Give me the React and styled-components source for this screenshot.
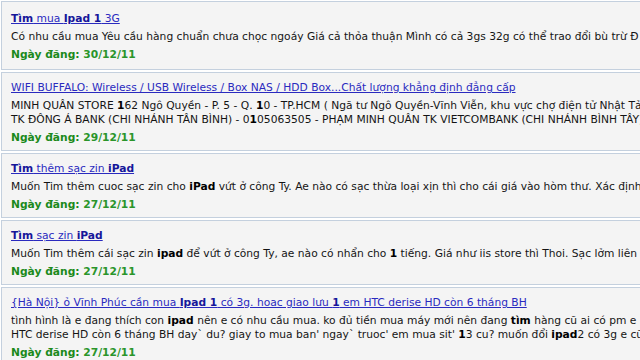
import React from "react";
import styled, { createGlobalStyle } from "styled-components";

const Global = createGlobalStyle`
  html, body { margin: 0; padding: 0; background: #ffffff; overflow: hidden; }
  body { font-family: "DejaVu Sans", Verdana, sans-serif; font-size: 10.7px; color: #111; }
`;

const List = styled.div`
  width: 1100px;
  padding: 1px 0 0 1px;
  display: flex;
  flex-direction: column;
  gap: 2px;
`;

const Item = styled.div`
  background: #f4f4f4;
  border: 1px solid #c4d0de;
  padding: ${(p) => (p.$first ? "10px 9px 7px" : "8px 9px 5px")};
  display: flex;
  flex-direction: column;
  gap: 4px;
`;

const Title = styled.a`
  display: block;
  line-height: 14px;
  color: #2a2abf;
  text-decoration: underline;
  white-space: nowrap;
  b { color: #16169a; }
`;

const Desc = styled.div`
  line-height: 14px;
  white-space: nowrap;
  color: #141414;
  b { color: #000; }
`;

const DateLine = styled.div`
  line-height: 14px;
  font-weight: bold;
  color: #1b8a1b;
  span { color: #2a952a; }
`;

const items = [
  {
    title: (
      <>
        <b>Tìm</b> mua <b>Ipad 1</b> 3G
      </>
    ),
    desc: [
      <>Có nhu cầu mua Yêu cầu hàng chuẩn chưa chọc ngoáy Giá cả thỏa thuận Mình có cả 3gs 32g có thể trao đổi bù trừ Đ</>,
    ],
    date: "30/12/11",
  },
  {
    title: <>WIFI BUFFALO: Wireless / USB Wireless / Box NAS / HDD Box...Chất lượng khẳng định đẳng cấp</>,
    desc: [
      <>MINH QUÂN STORE <b>1</b>62 Ngô Quyền - P. 5 - Q. <b>1</b>0 - TP.HCM ( Ngã tư Ngô Quyền-Vĩnh Viễn, khu vực chợ điện tử Nhật Tảo )</>,
      <>TK ĐÔNG Á BANK (CHI NHÁNH TÂN BÌNH) - 0<b>1</b>05063505 - PHẠM MINH QUÂN TK VIETCOMBANK (CHI NHÁNH BÌNH TÂY)</>,
    ],
    date: "29/12/11",
  },
  {
    title: (
      <>
        <b>Tìm</b> thêm sạc zin <b>iPad</b>
      </>
    ),
    desc: [
      <>Muốn Tim thêm cuoc sạc zin cho <b>iPad</b> vứt ở công Ty. Ae nào có sạc thừa loại xịn thì cho cái giá vào hòm thư. Xác định</>,
    ],
    date: "27/12/11",
  },
  {
    title: (
      <>
        <b>Tìm</b> sạc zin <b>iPad</b>
      </>
    ),
    desc: [
      <>Muốn Tim thêm cái sạc zin <b>ipad</b> để vứt ở công Ty, ae nào có nhẩn cho <b>1</b> tiếng. Giá như iis store thì Thoi. Sạc lởm liên</>,
    ],
    date: "27/12/11",
  },
  {
    title: (
      <>
        {"{Hà Nội} ỏ Vĩnh Phúc cần mua "}<b>Ipad 1</b> có 3g. hoac giao lưu <b>1</b> em HTC derise HD còn 6 tháng BH
      </>
    ),
    desc: [
      <>tình hình là e đang thích con <b>ipad</b> nên e có nhu cầu mua. ko đủ tiền mua máy mới nên đang <b>tìm</b> hàng cũ ai có pm e</>,
      <>HTC derise HD còn 6 tháng BH day` du? giay to mua ban' ngay` truoc' em mua sit' <b>1</b>3 cu? muốn đổi <b>ipad</b>2 có 3g e cũng</>,
    ],
    date: "27/12/11",
  },
];

export default function App() {
  return (
    <>
      <Global />
      <List>
        {items.map((it, i) => (
          <Item key={i} $first={i === 0}>
            <Title href="#">{it.title}</Title>
            <Desc>
              {it.desc.map((d, j) => (
                <div key={j}>{d}</div>
              ))}
            </Desc>
            <DateLine>
              Ngày đăng: <span>{it.date}</span>
            </DateLine>
          </Item>
        ))}
      </List>
    </>
  );
}
